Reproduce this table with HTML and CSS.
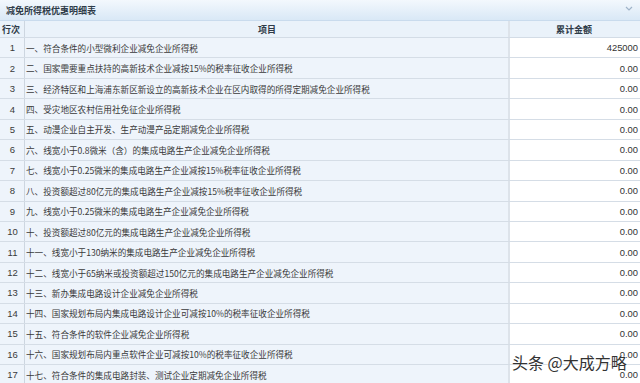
FILE: index.html
```html
<!DOCTYPE html>
<html lang="zh">
<head>
<meta charset="utf-8">
<link rel="stylesheet" href="styles.css">
</head>
<body>
<div class="panel">
  <div class="titlebar">
    <span class="title">减免所得税优惠明细表</span>
    <svg class="chev" width="8" height="5" viewBox="0 0 8 5"><path d="M1 1 L4 4 L7 1" fill="none" stroke="#9fb3c8" stroke-width="1.2"/></svg>
  </div>
  <div class="table">
    <div class="row head">
      <div class="c num">行次</div>
      <div class="c item">项目</div>
      <div class="c amt">累计金额</div>
    </div>
    <div class="row"><div class="c num">1</div><div class="c item">一、符合条件的小型微利企业减免企业所得税</div><div class="c amt">425000</div></div>
    <div class="row"><div class="c num">2</div><div class="c item">二、国家需要重点扶持的高新技术企业减按15%的税率征收企业所得税</div><div class="c amt">0.00</div></div>
    <div class="row"><div class="c num">3</div><div class="c item">三、经济特区和上海浦东新区新设立的高新技术企业在区内取得的所得定期减免企业所得税</div><div class="c amt">0.00</div></div>
    <div class="row"><div class="c num">4</div><div class="c item">四、受灾地区农村信用社免征企业所得税</div><div class="c amt">0.00</div></div>
    <div class="row"><div class="c num">5</div><div class="c item">五、动漫企业自主开发、生产动漫产品定期减免企业所得税</div><div class="c amt">0.00</div></div>
    <div class="row"><div class="c num">6</div><div class="c item">六、线宽小于0.8微米（含）的集成电路生产企业减免企业所得税</div><div class="c amt">0.00</div></div>
    <div class="row"><div class="c num">7</div><div class="c item">七、线宽小于0.25微米的集成电路生产企业减按15%税率征收企业所得税</div><div class="c amt">0.00</div></div>
    <div class="row"><div class="c num">8</div><div class="c item">八、投资额超过80亿元的集成电路生产企业减按15%税率征收企业所得税</div><div class="c amt">0.00</div></div>
    <div class="row"><div class="c num">9</div><div class="c item">九、线宽小于0.25微米的集成电路生产企业减免企业所得税</div><div class="c amt">0.00</div></div>
    <div class="row"><div class="c num">10</div><div class="c item">十、投资额超过80亿元的集成电路生产企业减免企业所得税</div><div class="c amt">0.00</div></div>
    <div class="row"><div class="c num">11</div><div class="c item">十一、线宽小于130纳米的集成电路生产企业减免企业所得税</div><div class="c amt">0.00</div></div>
    <div class="row"><div class="c num">12</div><div class="c item">十二、线宽小于65纳米或投资额超过150亿元的集成电路生产企业减免企业所得税</div><div class="c amt">0.00</div></div>
    <div class="row"><div class="c num">13</div><div class="c item">十三、新办集成电路设计企业减免企业所得税</div><div class="c amt">0.00</div></div>
    <div class="row"><div class="c num">14</div><div class="c item">十四、国家规划布局内集成电路设计企业可减按10%的税率征收企业所得税</div><div class="c amt">0.00</div></div>
    <div class="row"><div class="c num">15</div><div class="c item">十五、符合条件的软件企业减免企业所得税</div><div class="c amt">0.00</div></div>
    <div class="row"><div class="c num">16</div><div class="c item">十六、国家规划布局内重点软件企业可减按10%的税率征收企业所得税</div><div class="c amt">0.00</div></div>
    <div class="row"><div class="c num">17</div><div class="c item">十七、符合条件的集成电路封装、测试企业定期减免企业所得税</div><div class="c amt">0.00</div></div>
  </div>
  <div class="watermark">头条 @大成方略</div>
</div>
</body>
</html>
```
FILE: styles.css
```css
html, body {
  margin: 0;
  padding: 0;
  background: #eef4fb;
}
.panel {
  position: relative;
  width: 640px;
  height: 383px;
  overflow: hidden;
  font-family: "Noto Sans CJK SC", "Liberation Sans", sans-serif;
  color: #3a3a3a;
}
.titlebar {
  height: 21px;
  box-sizing: border-box;
  display: flex;
  align-items: center;
  justify-content: space-between;
  padding: 0 7px 0 6px;
  background: linear-gradient(#f3f8fd, #d9e8f6);
  border-bottom: 1px solid #c9dbed;
}
.title {
  font-size: 9px;
  font-weight: bold;
  color: #2f3b48;
}
.chev {
  display: block;
  margin-top: -4px;
}
.row {
  display: grid;
  grid-template-columns: 25px 485px 130px;
  height: 20.44px;
  box-sizing: border-box;
  border-bottom: 1px solid #d5dde6;
}
.row.head {
  height: 17px;
  background: #eaf2fa;
  border-bottom: 1px solid #d3dce6;
}
.c {
  display: flex;
  align-items: center;
  font-size: 8.6px;
  white-space: nowrap;
  overflow: hidden;
}
.num {
  justify-content: center;
  border-right: 1px solid #cdd6e0;
  font-family: "Liberation Sans", "Noto Sans CJK SC", sans-serif;
  font-size: 9.5px;
  padding-left: 1px;
}
.item {
  padding-left: 1px;
  border-right: 2px solid #dde3ea;
}
.amt {
  justify-content: flex-end;
  padding-right: 2px;
  background: #ffffff;
  font-family: "Liberation Sans", sans-serif;
  font-size: 9.4px;
  color: #333;
}
.head .c {
  font-family: "Noto Sans CJK SC", sans-serif;
  font-weight: bold;
  font-size: 9px;
  color: #2f3b48;
}
.head .num {
  justify-content: flex-start;
  padding-left: 2px;
}
.head .item {
  justify-content: center;
}
.head .amt {
  justify-content: center;
  background: #eaf2fa;
}
.watermark {
  position: absolute;
  left: 512px;
  top: 353px;
  font-size: 16px;
  line-height: 18px;
  color: #333;
  font-family: "Noto Sans CJK SC", sans-serif;
  text-shadow: 0 0 2px #fff, 0 0 2px #fff, 0 0 1px #fff;
}
```
